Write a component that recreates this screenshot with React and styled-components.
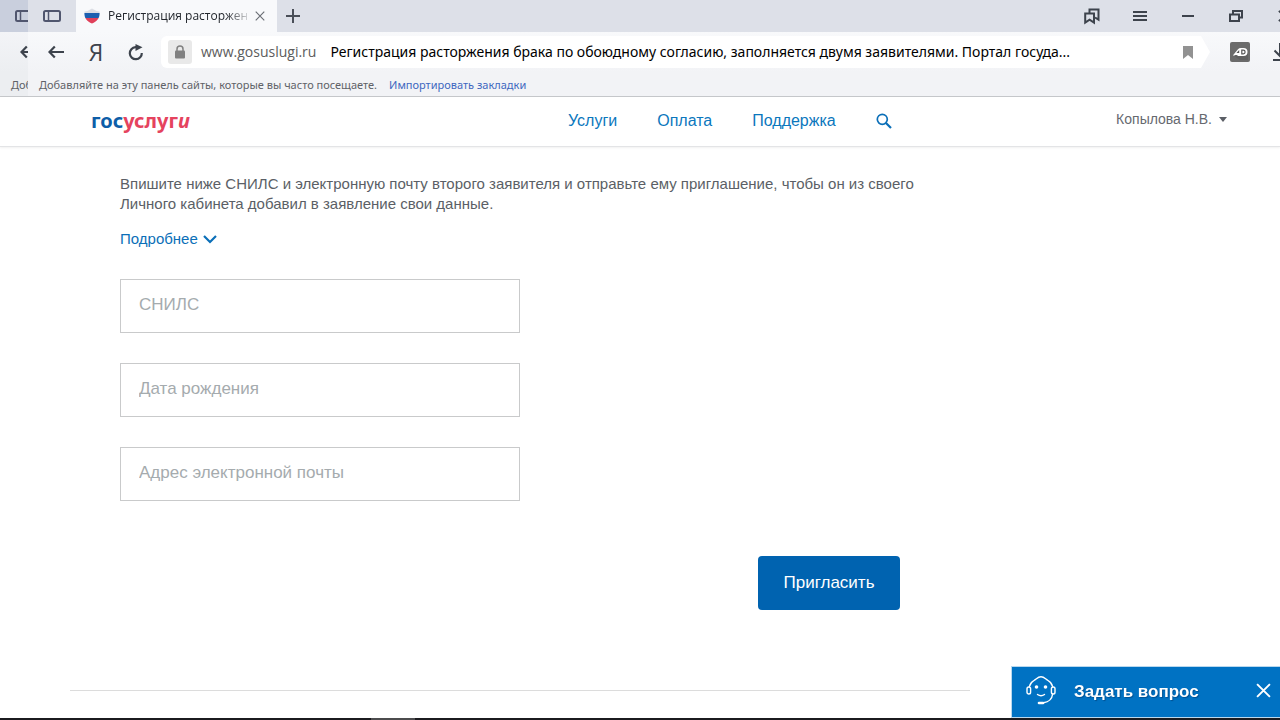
import React from "react";
import styled, { createGlobalStyle, css } from "styled-components";

const narrowFont = css`"Open Sans", "Noto Sans", sans-serif`;
const chromeFont = css`"Noto Sans", "Open Sans", sans-serif`;
const siteFont = css`"Liberation Sans", Arial, sans-serif`;

const GlobalStyle = createGlobalStyle`
  *, *::before, *::after { box-sizing: border-box; }
  body { margin: 0; background: #fff; font-family: ${siteFont}; color: #5b5f66; overflow-x: hidden; }
  button, input { font: inherit; color: inherit; }
  button { border: 0; padding: 0; background: none; cursor: pointer; }
  a { text-decoration: none; }
`;

const Page = styled.div`
  display: flex;
  flex-direction: column;
  min-height: 100vh;
`;

/* Browser chrome */

const Chrome = styled.header`
  display: grid;
  grid-template-columns: 28px minmax(0, 1fr);
  border-bottom: 1px solid #c6c8cb;
  font-family: ${chromeFont};
  color: #3d434c;
`;

const Pane = styled.div`
  min-width: 0;
  overflow: hidden;
  background: linear-gradient(#f8f9fb 32px, #f2f3f6 72px);
  ${(p) => p.$back && css`background: linear-gradient(#f3f4f7 32px, #eceef1 72px);`}
`;

const TabStrip = styled.div`
  display: flex;
  height: 32px;
  background: ${(p) => (p.$back ? "#c9cfdd" : "#dde0e8")};
`;

const StripButton = styled.button`
  flex: none;
  width: ${(p) => p.$width || 48}px;
  display: flex;
  align-items: center;
  justify-content: center;
`;

const Tab = styled.div`
  flex: none;
  display: flex;
  align-items: center;
  gap: 8px;
  width: 201px;
  padding: 0 12px 0 8px;
  background: #f8f9fb;
  color: #6a6e75;
`;

const TabTitle = styled.span`
  flex: 1;
  overflow: hidden;
  white-space: nowrap;
  font-family: ${narrowFont};
  font-size: 12px;
  line-height: 16px;
  color: #22262c;
  mask-image: linear-gradient(90deg, #000 85%, rgba(0, 0, 0, 0.2));
`;

const WindowControls = styled.div`
  display: flex;
  margin-left: auto;
  margin-right: -28px;
`;

const Toolbar = styled.div`
  display: flex;
  align-items: center;
  height: 40px;
  padding-left: 8px;
`;

const ToolButton = styled.button`
  flex: none;
  display: flex;
  align-items: center;
  justify-content: center;
  width: 40px;
  height: 32px;
`;

const YandexButton = styled(ToolButton)`
  font-family: "Liberation Sans Narrow", "Open Sans", sans-serif;
  font-size: 23px;
  line-height: 32px;
`;

const AddressBar = styled.div`
  flex: 1;
  min-width: 0;
  display: flex;
  align-items: center;
  height: 32px;
  margin: 0 10px 0 5px;
  padding: 0 17px 0 7px;
  background: #fff;
  border-radius: 6px 0 0 6px;
  clip-path: polygon(0 0, calc(100% - 9px) 0, 100% 50%, calc(100% - 9px) 100%, 0 100%);
  font-size: 14px;
  line-height: 20px;
  white-space: nowrap;
`;

const LockBadge = styled.span`
  flex: none;
  display: flex;
  align-items: center;
  justify-content: center;
  width: 24px;
  height: 24px;
  margin-right: 9px;
  border-radius: 3px;
  background: #e9e9e9;
`;

const Host = styled.span`
  flex: none;
  margin-right: 14px;
  font-family: ${narrowFont};
  color: #5c5c5c;
`;

const PageTitle = styled.span`
  overflow: hidden;
  color: #000;
`;

const BookmarkButton = styled.button`
  display: flex;
  margin-left: auto;
`;

const DownloadSlot = styled.div`
  display: flex;
  margin-right: -20px;
`;

const BookmarksBar = styled.div`
  display: flex;
  gap: 12px;
  height: 24px;
  padding-left: 11px;
  font-size: 11px;
  line-height: 26px;
  white-space: nowrap;
  color: #606268;
`;

const ImportLink = styled.a`
  color: #3e67c0;
`;

/* Site */

const SiteHeader = styled.header`
  display: flex;
  align-items: center;
  height: 50px;
  padding: 0 53px 2px 91px;
  border-bottom: 1px solid #e3e4e6;
  box-shadow: 0 1px 2px rgba(0, 0, 0, 0.06);
`;

const Logo = styled.a`
  flex: 0 1 477px;
  font-family: "Noto Sans", "Open Sans", sans-serif;
  font-size: 20px;
  line-height: 24px;
  font-weight: 700;
  color: #0d5ea8;
`;

const LogoRed = styled.span`
  color: #e5435e;
`;

const Nav = styled.nav`
  display: flex;
  align-items: center;
  gap: 40px;
  font-size: 16px;
  line-height: 24px;
`;

const NavLink = styled.a`
  color: #0b77bd;
`;

const IconButton = styled.button`
  display: flex;
`;

const UserMenu = styled.button`
  display: flex;
  align-items: center;
  gap: 7px;
  margin-left: auto;
  padding-bottom: 3px;
  font-size: 14px;
  line-height: 20px;
  color: #66696f;
`;

const Main = styled.main`
  flex: 1;
  width: 100%;
  max-width: 970px;
  padding: 27px 0 27px 70px;
`;

const Form = styled.form`
  display: flex;
  flex-direction: column;
  align-items: flex-start;
  padding: 0 0 80px 50px;
  border-bottom: 1px solid #dcdcdc;
`;

const Intro = styled.p`
  margin: 0 0 15px;
  font-size: 15px;
  line-height: 20px;
`;

const MoreButton = styled.button`
  display: flex;
  align-items: center;
  gap: 5px;
  margin-bottom: 30px;
  font-size: 15px;
  line-height: 20px;
  color: #0b6fb8;
`;

const Fields = styled.div`
  display: flex;
  flex-direction: column;
  gap: 30px;
  width: 100%;
  max-width: 400px;
`;

const Field = styled.input`
  width: 100%;
  height: 54px;
  padding: 0 18px 2px;
  border: 1px solid #c9cacb;
  border-radius: 0;
  background: #fff;
  font-size: 17px;
  outline: none;

  &::placeholder {
    color: #a5abae;
    opacity: 1;
  }
`;

const SubmitButton = styled.button`
  align-self: flex-end;
  width: 142px;
  height: 54px;
  margin: 55px 70px 0 0;
  border-radius: 4px;
  background: #0063b0;
  color: #fff;
  font-size: 17px;
  line-height: 24px;
`;

const ChatWidget = styled.aside`
  position: fixed;
  right: 0;
  bottom: 3px;
  display: flex;
  align-items: center;
  width: 268px;
  height: 50px;
  padding: 0 9px 3px 14px;
  background: #0072c3;
  color: #fff;
  box-shadow: 0 0 0 1px #b9d8ee;
`;

const ChatOpen = styled.button`
  flex: 1;
  display: flex;
  align-items: center;
  gap: 18px;
  font-size: 17px;
  line-height: 24px;
  font-weight: 700;
`;

const ChatLabel = styled.span`
  padding-top: 2px;
  text-shadow: 1px 1px 1px rgba(0, 50, 100, 0.5);
`;

const Taskbar = styled.footer`
  position: fixed;
  left: 0;
  right: 0;
  bottom: 0;
  height: 2px;
  padding-left: 371px;
  background: #1b1b1f;
`;

const TaskbarItem = styled.div`
  width: 44px;
  height: 2px;
  background: #4c4c4e;
`;

/* Icons */

const PanelIcon = () => (
  <svg width="18" height="12" viewBox="0 0 18 12" fill="none" stroke="#50566e" strokeWidth="2">
    <rect x="1" y="1" width="16" height="10" rx="1.500" />
    <path d="M5.500 1v10" strokeWidth="1.500" />
  </svg>
);

const BackIcon = () => (
  <svg width="16" height="14" viewBox="0 0 16 14" fill="none" stroke="#3d434c" strokeWidth="2.200">
    <path d="M1.500 7H16M6.800 1.500 1.500 7l5.300 5.500" />
  </svg>
);

const FlagIcon = () => (
  <svg width="16" height="16" viewBox="0 0 16 16">
    <clipPath id="flagShape">
      <path d="M.5 3.500Q4.500 3 8 .5 11.500 3 15.500 3.500C16.200 9.500 13.500 13.500 8 15.500 2.500 13.500-.2 9.500.5 3.500Z" />
    </clipPath>
    <g clipPath="url(#flagShape)">
      <path fill="#dcdee4" d="M0 0h16v5H0z" />
      <path fill="#1c5fb0" d="M0 5h16v5H0z" />
      <path fill="#e0405a" d="M0 10h16v6H0z" />
    </g>
  </svg>
);

const CloseIcon = ({ size, width }) => (
  <svg width={size} height={size} viewBox="0 0 14 14" fill="none" stroke="currentColor" strokeWidth={width}>
    <path d="m1 1 12 12M13 1 1 13" />
  </svg>
);

const PlusIcon = () => (
  <svg width="14" height="14" viewBox="0 0 14 14" stroke="#4a4f58" strokeWidth="2">
    <path d="M7 0v14M0 7h14" />
  </svg>
);

const CollectionsIcon = () => (
  <svg width="16" height="17" viewBox="0 0 16 17" fill="none" stroke="#3d434c" strokeWidth="2">
    <path d="M1.200 5.500H10v9.200l-4.400-3-4.400 3Z" />
    <path d="M5.500 5.500V1.500h9v10.200L11 9.500" />
  </svg>
);

const MenuIcon = () => (
  <svg width="14" height="10" viewBox="0 0 14 10" fill="#3d434c">
    <path d="M0 0h14v2H0zM0 4h14v2H0zM0 8h14v2H0z" />
  </svg>
);

const MinimizeIcon = () => (
  <svg width="12" height="2" viewBox="0 0 12 2" fill="#3d434c">
    <path d="M0 0h12v2H0z" />
  </svg>
);

const RestoreIcon = () => (
  <svg width="14" height="12" viewBox="0 0 14 12" fill="none" stroke="#3d434c" strokeWidth="2">
    <path d="M1 4.500h9V11H1zM4 4.500V1h9v6.500h-3" />
  </svg>
);

const ReloadIcon = () => (
  <svg width="16" height="17" viewBox="0 0 16 17" fill="none">
    <path d="M9.500 3.200H7.500A6 6 0 1 0 13.800 9" stroke="#3d434c" strokeWidth="2.200" />
    <path d="m7.500 0 7 3.300-7 3.700Z" fill="#3d434c" />
  </svg>
);

const LockIcon = () => (
  <svg width="10" height="14" viewBox="0 0 10 14">
    <path d="M2 6V4a3 3 0 0 1 6 0v2" fill="none" stroke="#808080" strokeWidth="1.500" />
    <rect y="5.500" width="10" height="8" rx="1" fill="#808080" />
  </svg>
);

const BookmarkIcon = () => (
  <svg width="10" height="13" viewBox="0 0 10 13" fill="#929292">
    <path d="M0 0h10v13L5 9l-5 4Z" />
  </svg>
);

const AdguardIcon = () => (
  <svg width="20" height="20" viewBox="0 0 20 20" fill="none">
    <rect width="20" height="20" rx="2" fill="#6b6b6b" />
    <path d="m4 14 9-1 4-3 1 1v7h-8Z" fill="#616161" />
    <path d="M2.800 13.500 8 7.200Q9 6 11 6h2.500a4 4 0 0 1 0 8H8l-1-1H5l-.5.500Z" fill="#fff" />
    <path d="m6.500 11 2.700-3v3Z" fill="#555" />
    <path d="M11.800 8.200h1.500a1.800 1.800 0 0 1 0 3.600h-1.500Z" stroke="#555" strokeWidth="1.200" />
  </svg>
);

const DownloadIcon = () => (
  <svg width="14" height="20" viewBox="0 0 14 20" fill="none" stroke="#3d434c" strokeWidth="2">
    <path d="M7 1v13M1.500 8.500 7 14l5.500-5.500M0 18h14" />
  </svg>
);

const SearchIcon = () => (
  <svg width="16" height="16" viewBox="0 0 16 16" fill="none" stroke="#0b6fb8">
    <circle cx="6.300" cy="6.300" r="5" strokeWidth="1.700" />
    <path d="m10 10 5 5" strokeWidth="2.200" />
  </svg>
);

const CaretIcon = () => (
  <svg width="8" height="5" viewBox="0 0 8 5" fill="#5b5f66">
    <path d="M0 0h8L4 5Z" />
  </svg>
);

const ChevronIcon = () => (
  <svg width="14" height="9" viewBox="0 0 14 9" fill="none" stroke="#0b6fb8" strokeWidth="2.200">
    <path d="m1 1 6 6 6-6" />
  </svg>
);

const OperatorIcon = () => (
  <svg width="30" height="30" viewBox="0 0 30 30" fill="none" stroke="#fff" strokeWidth="1.400" strokeLinecap="round">
    <path d="M3.500 10.500C4 7.500 5.500 6 8 4.500c2.500-1.500 4-3.700 7-3.700s4.500 2.200 7 3.700c2.500 1.500 4 3 4.500 6" />
    <rect x="1" y="11" width="3.600" height="7" rx="1.800" />
    <rect x="25.400" y="11" width="3.600" height="7" rx="1.800" />
    <path d="M26.500 18.500c-.5 4.500-4 7.500-9 8.200" />
    <path d="M13 27h4" strokeWidth="2.600" />
    <path d="M11.500 18.500q3.500 2.500 7 0" />
    <circle cx="10.500" cy="11" r="1.800" fill="#fff" stroke="none" />
    <circle cx="19.500" cy="11" r="1.800" fill="#fff" stroke="none" />
  </svg>
);

export default function App() {
  return (
    <Page>
      <GlobalStyle />
      <Chrome>
        <Pane $back>
          <TabStrip $back>
            <StripButton aria-label="Панель"><PanelIcon /></StripButton>
          </TabStrip>
          <Toolbar>
            <ToolButton aria-label="Назад"><BackIcon /></ToolButton>
          </Toolbar>
          <BookmarksBar><span>Доб</span></BookmarksBar>
        </Pane>
        <Pane>
          <TabStrip>
            <StripButton aria-label="Панель"><PanelIcon /></StripButton>
            <Tab>
              <FlagIcon />
              <TabTitle>Регистрация расторжен</TabTitle>
              <IconButton aria-label="Закрыть вкладку"><CloseIcon size={10} width={1.6} /></IconButton>
            </Tab>
            <StripButton $width={32} aria-label="Новая вкладка"><PlusIcon /></StripButton>
            <WindowControls>
              <StripButton aria-label="Коллекции"><CollectionsIcon /></StripButton>
              <StripButton aria-label="Меню"><MenuIcon /></StripButton>
              <StripButton aria-label="Свернуть"><MinimizeIcon /></StripButton>
              <StripButton aria-label="Восстановить"><RestoreIcon /></StripButton>
              <StripButton aria-label="Закрыть"><CloseIcon size={12} width={2} /></StripButton>
            </WindowControls>
          </TabStrip>
          <Toolbar>
            <ToolButton aria-label="Назад"><BackIcon /></ToolButton>
            <YandexButton>Я</YandexButton>
            <ToolButton aria-label="Обновить"><ReloadIcon /></ToolButton>
            <AddressBar>
              <LockBadge><LockIcon /></LockBadge>
              <Host>www.gosuslugi.ru</Host>
              <PageTitle>Регистрация расторжения брака по обоюдному согласию, заполняется двумя заявителями. Портал госуда...</PageTitle>
              <BookmarkButton aria-label="Добавить в закладки"><BookmarkIcon /></BookmarkButton>
            </AddressBar>
            <ToolButton aria-label="Блокировщик рекламы"><AdguardIcon /></ToolButton>
            <DownloadSlot>
              <ToolButton aria-label="Загрузки"><DownloadIcon /></ToolButton>
            </DownloadSlot>
          </Toolbar>
          <BookmarksBar>
            <span>Добавляйте на эту панель сайты, которые вы часто посещаете.</span>
            <ImportLink href="#import">Импортировать закладки</ImportLink>
          </BookmarksBar>
        </Pane>
      </Chrome>

      <SiteHeader>
        <Logo href="#home">гос<LogoRed>услуг<em>и</em></LogoRed></Logo>
        <Nav>
          <NavLink href="#services">Услуги</NavLink>
          <NavLink href="#payment">Оплата</NavLink>
          <NavLink href="#support">Поддержка</NavLink>
          <IconButton aria-label="Поиск"><SearchIcon /></IconButton>
        </Nav>
        <UserMenu>Копылова Н.В.<CaretIcon /></UserMenu>
      </SiteHeader>

      <Main>
        <Form onSubmit={(e) => e.preventDefault()}>
          <Intro>
            Впишите ниже СНИЛС и электронную почту второго заявителя и отправьте ему приглашение, чтобы он из своего
            Личного кабинета добавил в заявление свои данные.
          </Intro>
          <MoreButton type="button">Подробнее<ChevronIcon /></MoreButton>
          <Fields>
            <Field aria-label="СНИЛС" placeholder="СНИЛС" />
            <Field aria-label="Дата рождения" placeholder="Дата рождения" />
            <Field type="email" aria-label="Адрес электронной почты" placeholder="Адрес электронной почты" />
          </Fields>
          <SubmitButton type="submit">Пригласить</SubmitButton>
        </Form>
      </Main>

      <ChatWidget>
        <ChatOpen><OperatorIcon /><ChatLabel>Задать вопрос</ChatLabel></ChatOpen>
        <IconButton aria-label="Закрыть чат"><CloseIcon size={15} width={1.8} /></IconButton>
      </ChatWidget>
      <Taskbar><TaskbarItem /></Taskbar>
    </Page>
  );
}
